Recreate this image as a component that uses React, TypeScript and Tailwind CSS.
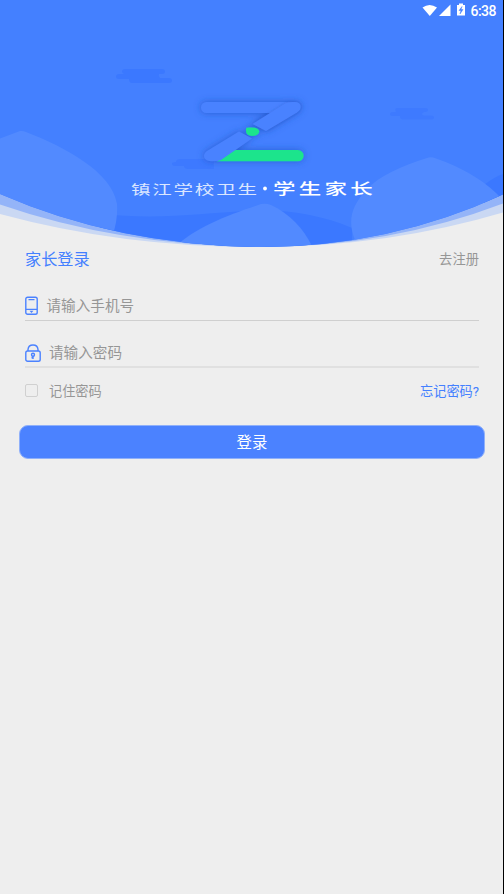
import React from "react";

const font = "font-['Roboto','Noto_Sans_CJK_SC',sans-serif]";

function Banner() {
  return (
    <svg className="block h-[250px] w-full" viewBox="0 0 503 250" preserveAspectRatio="none">
      <defs>
        <clipPath id="dome">
          <path d="M0 0H503V194.500Q390 247 260 247Q118 245.500 0 194Z" />
        </clipPath>
        <filter id="shade" x="-30%" y="-50%" width="160%" height="200%">
          <feDropShadow dx="0" dy="0" stdDeviation="3.800" floodColor="#2454c8" floodOpacity="0.8" />
        </filter>
        <filter id="seam" x="-30%" y="-50%" width="160%" height="200%">
          <feDropShadow dx="0" dy="0" stdDeviation="1.500" floodColor="#2454c8" floodOpacity="0.5" />
        </filter>
      </defs>
      <path d="M0 0H503V212.500Q390 246 265 247Q125 248 0 214Z" fill="#cad8f3" />
      <path d="M0 0H503V203.500Q390 246.500 262 247Q120 246 0 204.500Z" fill="#94b4f8" />
      <g clipPath="url(#dome)">
        <rect width="503" height="250" fill="#4480ff" />
        <path d="M100 214C160 220 205 213 245 211C290 209 320 215 352 228V250H100Z" fill="#3b78ff" />
        <path d="M484 185Q494 177 503 174V205H484Z" fill="#3b78ff" />
        <path d="M0 138.500L20 131Q23 130.500 26 132C65 147 112 172 117 204Q118 219 113 234L90 250H0Z" fill="#528aff" />
        <path d="M176 246C194 228 230 214 261 204Q266 203 271 205C290 214 303 228 312 246L260 250H176Z" fill="#528aff" />
        <path d="M355 240C347 220 352 206 366 190C380 175 402 166 427 158Q431 156.500 436 158.500C462 167 486 182 499 196L503 210V250H355Z" fill="#528aff" />
        <path d="M125 69H162Q165 69 165 71.500Q165 74 162 74H159Q158 76 160 78H169Q172 78 172 80.500Q172 83 169 83H132Q129 83 129 79H119Q116 79 116 76.500Q116 74 119 74H124Q122 73 122 71.500Q122 69 125 69Z" fill="#3b78ff" />
        <path d="M397 108H425Q428 108 428 110Q428 112 424 112Q420 114 424 115.500H431Q434 115.500 434 117.500Q434 119.500 431 119.500H403Q400 119.500 400 116H393Q390 116 390 114Q390 112 393 112H396Q394 108 397 108Z" fill="#3e7aff" />
        <path d="M180 159H214V169H188Q184 169 184 166H175Q172 166 172 163.500Q172 162 176 162Q176 159 180 159Z" fill="#3d79ff" />
      </g>
      <g filter="url(#shade)">
        <path d="M206.500 102H292L272 113H206.500A5.500 5.500 0 0 1 206.500 102Z" fill="#4a82ff" />
        <path d="M285 103.500Q288 102 292 102H295C302 102 302.500 109 297 112.500L266 131L252.500 124Z" fill="#4a82ff" filter="url(#seam)" />
        <path d="M233 150H298A5.500 5.500 0 0 1 298 161.300H217Z" fill="#1ae48c" />
        <path d="M239 131.500L252 138.500L221 160Q218 161.300 212 161.300C203 161.300 202 154.500 207 151Z" fill="#4a82ff" />
        <path d="M246 128.500Q246 127.500 249 127.500H252Q259.300 127.700 259.300 131.700Q258 136 252 136Q246 135.500 246 131Z" fill="#1ae48c" />
      </g>
      <g className={font}>
        <text transform="translate(131 193.500) scale(1.500 1)" fontSize="13" letterSpacing="1.200" fill="#dbe6ff">镇江学校卫生</text>
        <circle cx="265" cy="188.500" r="1.900" fill="#fff" />
        <text transform="translate(273 193.500) scale(1.500 1)" fontSize="15" fontWeight="500" letterSpacing="2.150" fill="#fff">学生家长</text>
      </g>
      <path d="M422.500 7.500Q429.500 2.500 437 7.500L429.800 16Z" fill="#fff" />
      <path d="M450.500 4.500V16H439Z" fill="#fff" />
      <path d="M459 3.500H463V5H465V15.500H457V5H459Z" fill="#fff" />
      <path d="M462 6.500L459 10.500H461L460 14L463 9.500H461Z" fill="#4480ff" stroke="#4480ff" strokeWidth=".5" />
      <text x="470.500" y="15.500" fontSize="14" fontWeight="500" fill="#fff" className={font} textLength="26">6:38</text>
    </svg>
  );
}

function PhoneIcon() {
  return (
    <svg className="h-[19px] w-[13px] shrink-0" viewBox="0 0 13 19" fill="none" stroke="#4b82ff">
      <rect x=".8" y="1.200" width="11.400" height="17" rx="1.800" strokeWidth="1.400" />
      <path d="M3.500 3.700H9.500M1 13.300H12" strokeWidth="1.200" />
      <path d="M4.500 14.700H8.500L6.500 17Z" fill="#4b82ff" stroke="none" />
    </svg>
  );
}

function LockIcon() {
  return (
    <svg className="h-[18px] w-4 shrink-0" viewBox="0 0 16 18" fill="none" stroke="#4b82ff" strokeWidth="1.400">
      <rect x=".8" y="7" width="14.400" height="10.200" rx="1.800" />
      <path d="M3 7V5.500Q3.300 1 8 1Q12.700 1 13 5.500V7" />
      <circle cx="8" cy="10.700" r="1.500" />
      <path d="M8 12V15M8 13.800H6.500" />
    </svg>
  );
}

export default function App() {
  return (
    <div className={`flex h-[894px] w-[504px] flex-col border-r border-black bg-[#eeeeee] text-[#969696] ${font}`}>
      <Banner />
      <main className="flex flex-col">
        <header className="ml-[25px] mr-6 flex h-[18px] items-center justify-between">
          <h1 className="pt-[2px] text-[16.2px] leading-[18px] text-[#4480ff]">家长登录</h1>
          <a className="pt-[2px] text-[13.3px] leading-[18px]">去注册</a>
        </header>
        <label className="ml-[25px] mr-6 mt-[23px] flex h-[30px] items-center gap-[8.5px] border-b border-[#cfcfcf]">
          <PhoneIcon />
          <span className="text-[14.6px] leading-5">请输入手机号</span>
        </label>
        <label className="ml-[25px] mr-6 mt-[16px] flex h-[31px] items-center gap-[8px] border-b-2 border-[#e0e0e0]">
          <span className="pt-[2px]"><LockIcon /></span>
          <span className="pt-[2px] text-[14.6px] leading-5">请输入密码</span>
        </label>
        <div className="ml-[25px] mr-6 mt-[14px] flex h-5 items-center justify-between text-[13.2px]">
          <label className="flex items-center gap-[11px]">
            <span className="mb-[2px] size-[13px] rounded-[2px] border border-[#d0d0d0]" />
            <span>记住密码</span>
          </label>
          <a className="text-[#4480ff]">忘记密码?</a>
        </div>
        <button className="ml-[19px] mr-[18px] mt-[23px] flex h-[34px] items-center justify-center rounded-[9px] border border-[#8fb0fa] bg-[#4b82ff] pt-[3px] text-[15.4px] text-white">
          登录
        </button>
      </main>
    </div>
  );
}
